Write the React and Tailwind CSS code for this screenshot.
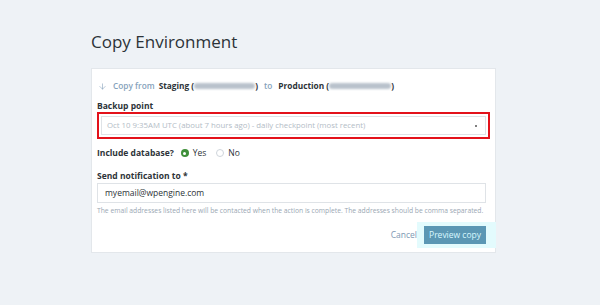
import { ArrowDown } from "lucide-react";

function Blur({ w }) {
  // redacted environment name, rendered as a soft smudge
  return (
    <span
      className="inline-block h-[6px] rounded-full bg-[#b9c2cc] blur-[1px] align-middle"
      style={{ width: w }}
    />
  );
}

export default function App() {
  return (
    <div
      className="w-[600px] h-[305px] bg-[#eef2f6] pl-[91px] pt-[30px] text-[#333]"
      style={{ fontFamily: '"Open Sans", "Liberation Sans", sans-serif' }}
    >
      <h1 className="text-[17px] leading-[24px] text-[#2c3338]">
        Copy Environment
      </h1>

      <div className="mt-[14px] w-[405px] bg-white border border-[#e3e7eb] pl-[5px] pr-[8px] pt-[10px] pb-[8px]">
        <div className="flex items-center h-[14px] text-[8.3px]">
          <ArrowDown size={9} strokeWidth={1.5} className="text-[#7f9cb6] ml-[1px]" />
          <span className="ml-[6px] text-[#86a2bb] font-semibold">Copy from</span>
          <span className="ml-[4px] font-bold text-[#2d3338]">Staging (</span>
          <Blur w={61} />
          <span className="font-bold text-[#2d3338]">)</span>
          <span className="ml-[6px] text-[#86a2bb] font-semibold">to</span>
          <span className="ml-[6px] font-bold text-[#2d3338]">Production (</span>
          <Blur w={62} />
          <span className="font-bold text-[#2d3338]">)</span>
        </div>

        <div className="mt-[7px] text-[8.5px] leading-[12px] font-bold text-[#2d3338]">
          Backup point
        </div>
        <div className="w-[393px] h-[27px] border-2 border-[#e3121b] p-[2px]">
          <div className="h-full border border-[#dfe3e7] flex items-center justify-between pl-[5px] pr-[8px]">
            <span className="text-[7.8px] text-[#b3bcc6]">
              Oct 10 9:35AM UTC (about 7 hours ago) - daily checkpoint (most recent)
            </span>
            <span className="w-[2px] h-[2px] bg-[#555] rounded-full" />
          </div>
        </div>

        <div className="mt-[7px] h-[14px] flex items-center text-[8.5px]">
          <span className="font-bold text-[#2d3338]">Include database?</span>
          <span className="ml-[7px] w-[8px] h-[8px] rounded-full bg-[#3f8f3a] flex items-center justify-center">
            <span className="w-[3px] h-[3px] rounded-full bg-white" />
          </span>
          <span className="ml-[4px] text-[#2d3338]">Yes</span>
          <span className="ml-[10px] w-[8px] h-[8px] rounded-full border border-[#cfd5db] bg-white" />
          <span className="ml-[4px] text-[#2d3338]">No</span>
        </div>

        <div className="mt-[9px] h-[14px] flex items-center text-[8.5px] font-bold text-[#2d3338]">
          Send notification to *
        </div>
        <div className="w-[389px] h-[20px] border border-[#dfe3e7] flex items-center pl-[7px] text-[8.5px] text-[#2d3338]">
          myemail@wpengine.com
        </div>
        <div className="mt-[2px] h-[12px] flex items-center text-[6.75px] text-[#9aa7b3] whitespace-nowrap">
          The email addresses listed here will be contacted when the action is complete. The addresses should be comma separated.
        </div>

        <div className="mt-[9px] flex items-center justify-end pr-[1px]">
          <span className="text-[8.5px] text-[#7d98b3] mr-[7px]">Cancel</span>
          <button className="h-[18px] w-[62px] bg-[#5b97b4] text-[#d9f7ff] text-[8.5px] shadow-[0_0_0_4px_#e3fbfd,-3px_0_0_4px_#e3fbfd,6px_0_0_4px_#e3fbfd]">
            Preview copy
          </button>
        </div>
      </div>
    </div>
  );
}
